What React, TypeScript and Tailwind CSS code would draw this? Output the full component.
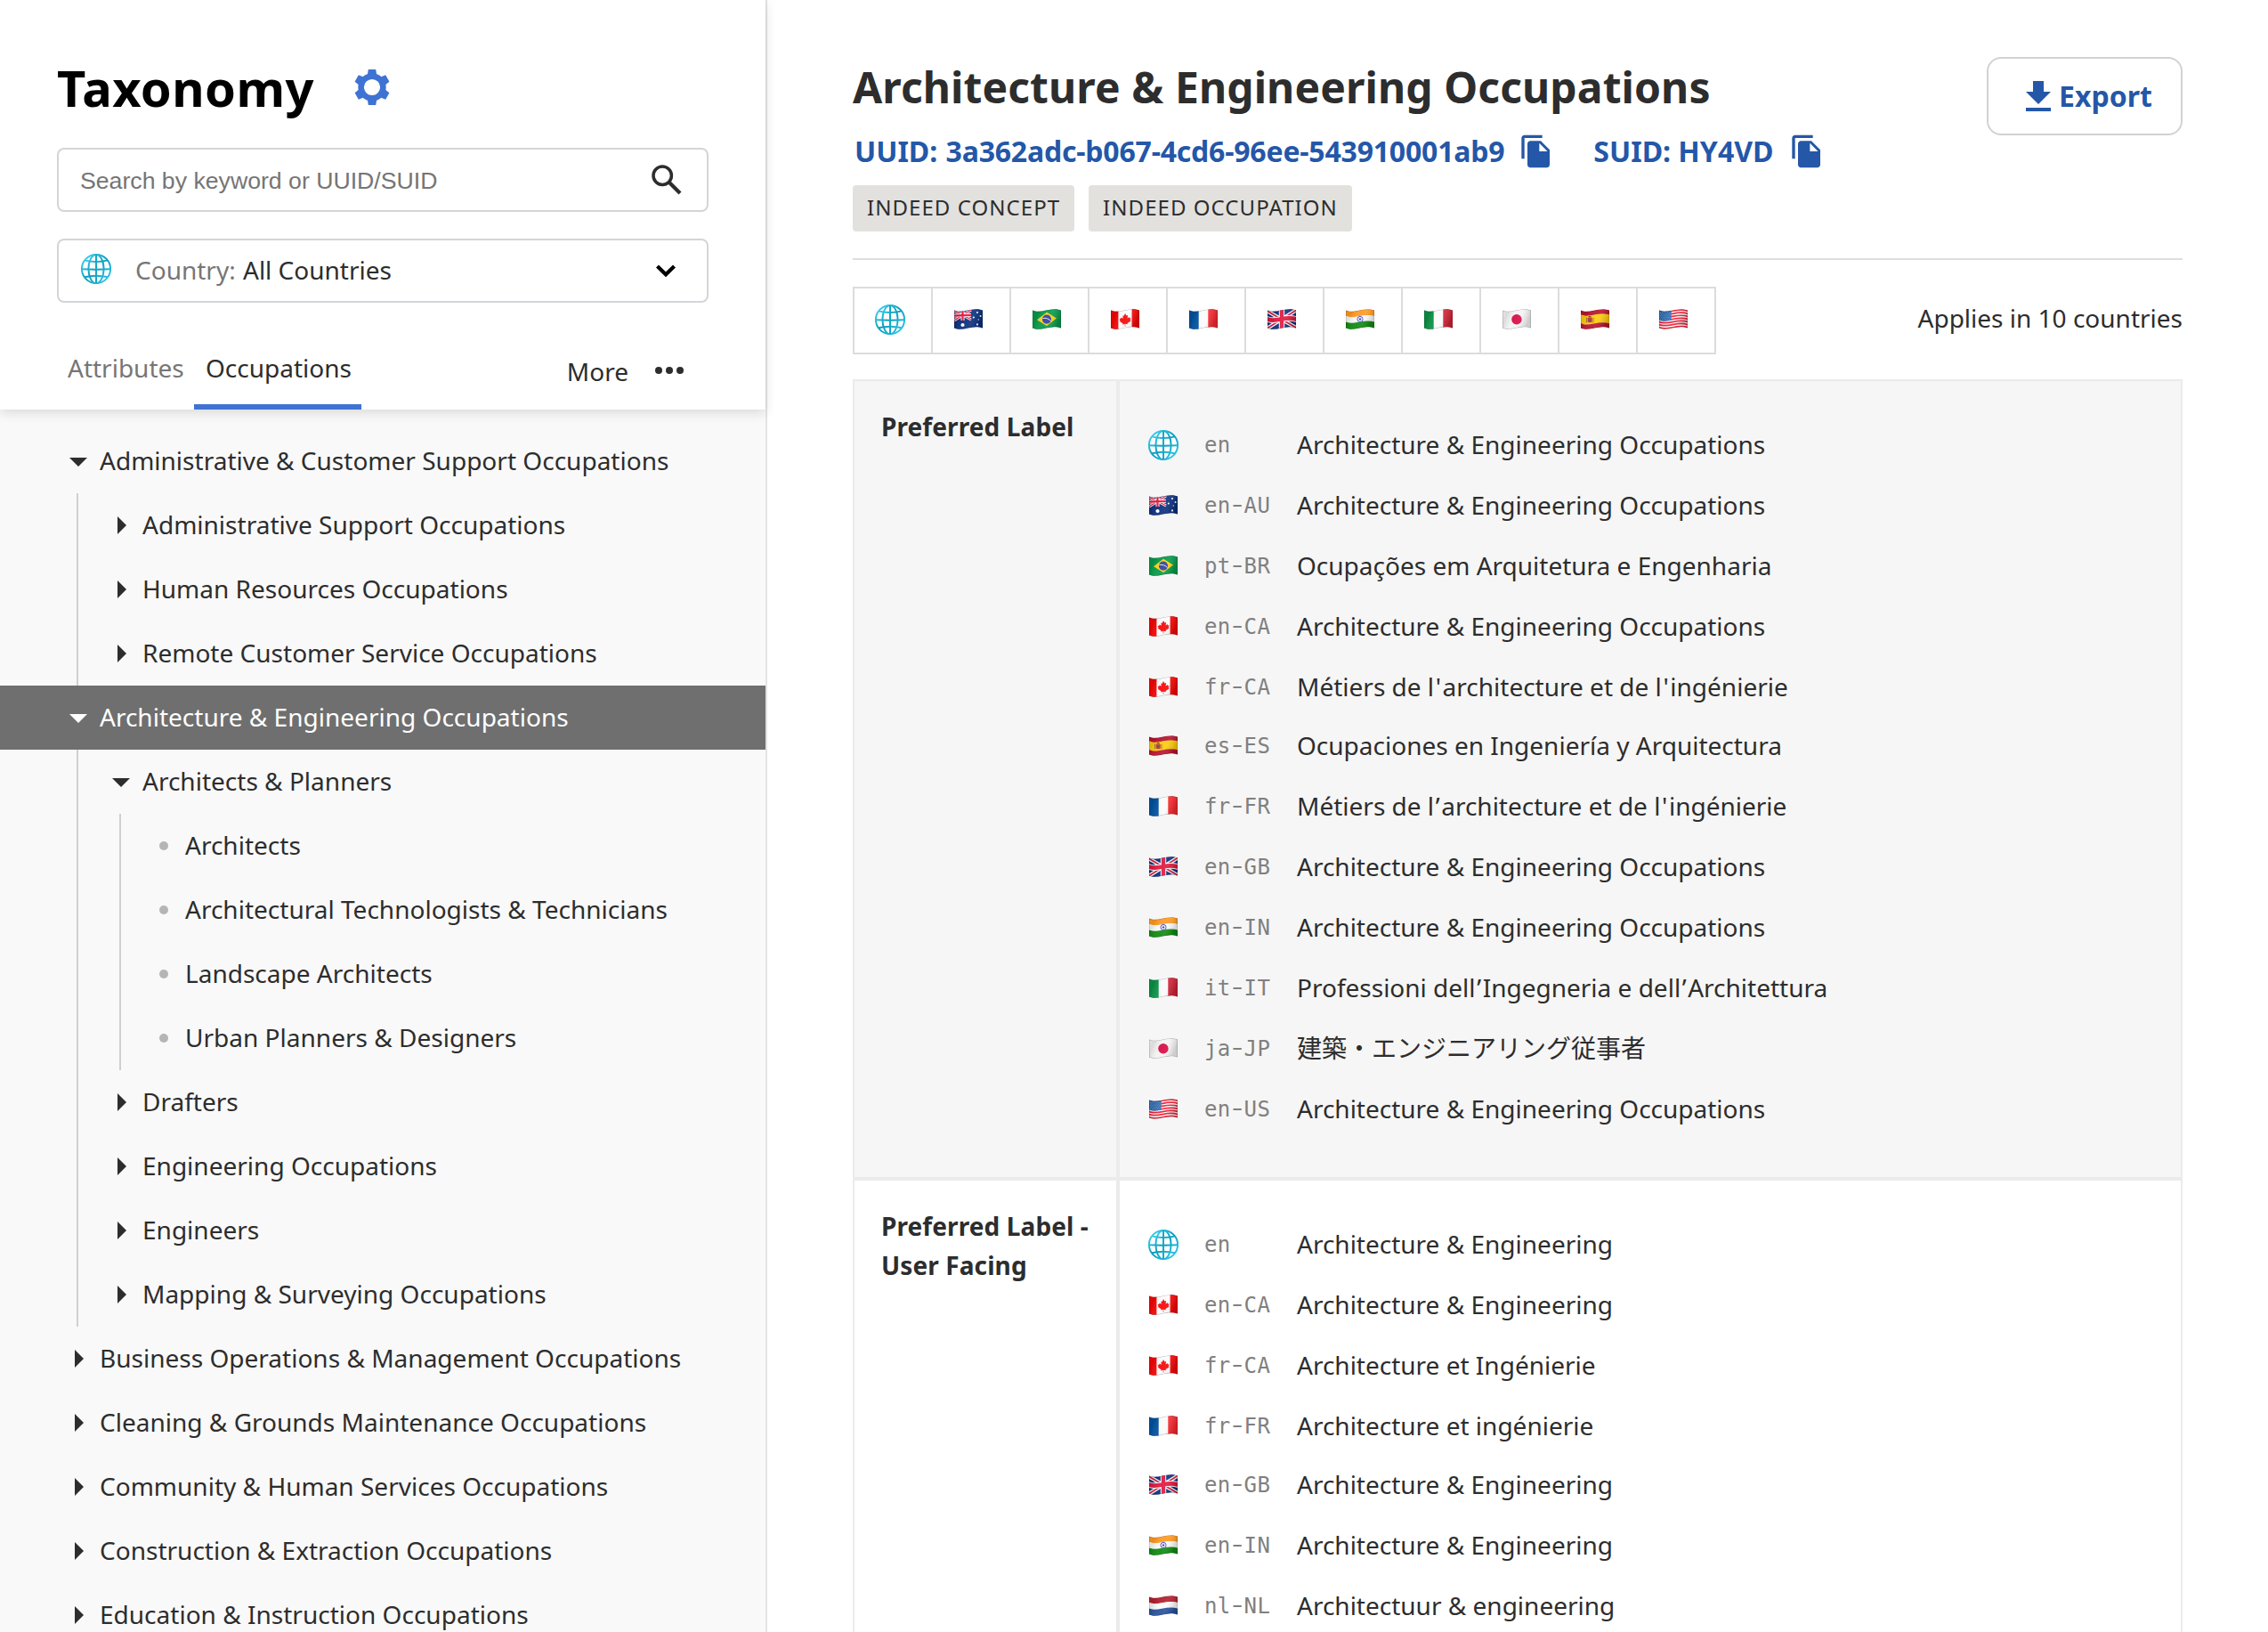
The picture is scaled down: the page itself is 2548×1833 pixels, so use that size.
import React from "react";

type FlagCode = "AU" | "BR" | "CA" | "FR" | "GB" | "IN" | "IT" | "JP" | "ES" | "US" | "NL";

/* ---------- Icons ---------- */

function Globe({ className = "" }: { className?: string }) {
  const id = React.useId();
  return (
    <svg viewBox="0 0 36 36" className={`h-9 w-9 shrink-0 ${className}`} fill="none">
      <defs>
        <linearGradient id={id} gradientUnits="userSpaceOnUse" x1="4" y1="4" x2="32" y2="32">
          <stop offset="0" stopColor="#45d3f0" />
          <stop offset="0.5" stopColor="#0a9dbd" />
          <stop offset="1" stopColor="#35cbea" />
        </linearGradient>
      </defs>
      <circle cx="18" cy="18" r="16.1" fill="#fff" stroke={`url(#${id})`} strokeWidth="2" />
      <g stroke={`url(#${id})`} strokeWidth="2">
        <ellipse cx="18" cy="18" rx="8.6" ry="16.1" />
        <path d="M5 8.4c8 1.900 18 1.900 26 0M2 18.200c10 .6 22 .6 32 0M4.600 27.200c8-1.800 19-1.800 26.800 0" />
        <path d="M17 1.800h2v32.400h-2z" fill="#12a8c8" stroke="none" />
      </g>
    </svg>
  );
}

const wave = (y: number) => `M-1 ${1.5 + y}H0c10 4.5 20 -4.500 32 0h1`;

function Band({ y, h, color }: { y: number; h: number; color: string }) {
  return <path d={wave(y + h / 2)} stroke={color} strokeWidth={h + 0.3} fill="none" />;
}

function UnionJack() {
  return (
    <>
      <rect width="32" height="24" fill="#0a2f7c" />
      <path d="M0 2.500 32 21M0 21.500 32 1.500" stroke="#fff" strokeWidth="4.200" />
      <path d="M0 2.500 32 21M0 21.500 32 1.500" stroke="#d8163c" strokeWidth="1.600" />
      <Band y={6.8} h={6.400} color="#fff" />
      <path d="M16 0v24" stroke="#fff" strokeWidth="6.400" />
      <Band y={7.800} h={4.400} color="#e0183f" />
      <path d="M16 0v24" stroke="#e0183f" strokeWidth="4.400" />
    </>
  );
}

function FlagArt({ code }: { code: FlagCode }) {
  switch (code) {
    case "AU":
      return (
        <>
          <rect width="32" height="24" fill="#0b2f7d" />
          <g>
            <path d="M0 2 19 12M0 13 19 1" stroke="#fff" strokeWidth="2.800" />
            <path d="M0 2 19 12M0 13 19 1" stroke="#e0183f" strokeWidth="1.200" />
            <path d="M0 7.600 19 6.800M9.500 1v12" stroke="#fff" strokeWidth="4" />
            <path d="M0 7.600 19 6.800M9.500 1v12" stroke="#f0123a" strokeWidth="2.200" />
          </g>
          <circle cx="9.500" cy="18" r="2.100" fill="#fff" />
          <g fill="#fff">
            <circle cx="26" cy="4" r="1.050" />
            <circle cx="21.800" cy="9.500" r="1.050" />
            <circle cx="29.600" cy="8" r="1.050" />
            <circle cx="27.300" cy="12" r="0.650" />
            <circle cx="26" cy="17.500" r="1.150" />
          </g>
        </>
      );
    case "BR":
      return (
        <>
          <rect width="32" height="24" fill="#079a49" />
          <path d="M5 12.300 16 3.800l11 6.700-11 8.600z" fill="#fcd116" />
          <circle cx="16" cy="11.600" r="5.100" fill="#32419b" />
          <path d="M11.300 10.600c3.500-1 7 .4 9.300 2.900" stroke="#dfe6f5" strokeWidth="1" fill="none" />
        </>
      );
    case "CA":
      return (
        <>
          <rect width="32" height="24" fill="#fbfbfb" />
          <path d="M0 0h8.400v24H0zM23.600 0H32v24h-8.400z" fill="#f60606" />
          <path
            d="M16 5l1.500 2.600 1.600-.6-.5 3.400 2-1.300.4 1.300 1.700-.1-1 2.300.7.800-3.800 2.700.2 1.100-2.500-.4v2.900h-.6v-2.900l-2.500.6.2-1.200-3.600-2.400.7-.8-.9-2.100 1.700-.1.400-1.200 2.100 1.100-.5-3.300 1.500.4z"
            fill="#f60606"
          />
        </>
      );
    case "FR":
      return (
        <>
          <rect width="32" height="24" fill="#fafafa" />
          <path d="M0 0h10.700v24H0z" fill="#0052a0" />
          <path d="M21.300 0H32v24H21.300z" fill="#f5282e" />
        </>
      );
    case "IT":
      return (
        <>
          <rect width="32" height="24" fill="#fafafa" />
          <path d="M0 0h10.700v24H0z" fill="#0a9246" />
          <path d="M21.300 0H32v24H21.300z" fill="#cf2336" />
        </>
      );
    case "GB":
      return <UnionJack />;
    case "IN":
      return (
        <>
          <Band y={0} h={6.700} color="#ff9a22" />
          <Band y={6.700} h={6.700} color="#fafafa" />
          <Band y={13.300} h={7} color="#0f8a10" />
          <circle cx="16" cy="11.500" r="3.100" fill="#e4e4fb" stroke="#3c3cc0" strokeWidth="0.900" />
          <circle cx="16" cy="11.500" r="1.100" fill="#2525a8" />
        </>
      );
    case "JP":
      return (
        <>
          <rect width="32" height="24" fill="#f3f3f3" />
          <circle cx="15.900" cy="11.700" r="5.700" fill="#d80a44" />
        </>
      );
    case "ES":
      return (
        <>
          <Band y={0} h={5.200} color="#b9132f" />
          <Band y={5.200} h={9.800} color="#fccb0b" />
          <Band y={15} h={5.200} color="#b9132f" />
          <path d="M7.600 10h5.200v4.200c0 1.400-5.200 1.400-5.200 0z" fill="#c0392b" />
          <path d="M6.400 9.600v6M14 9.600v6" stroke="#8a6a4a" strokeWidth="0.900" />
          <path d="M8.300 9.500c0-2.300 3.800-2.300 3.800 0z" fill="#9c3a22" />
          <circle cx="10.200" cy="12.800" r="1.100" fill="#5a4a6a" />
        </>
      );
    case "US":
      return (
        <>
          <rect width="32" height="24" fill="#fafafa" />
          {[0, 2, 4, 6, 8, 10, 12].map((i) => (
            <Band key={i} y={i * 1.54} h={1.400} color="#ea1c35" />
          ))}
          <path d="M0 0h13.600v12.600C9 13.600 4 14 0 12.400z" fill="#2866ac" />
          <g stroke="#a8c8ea" strokeWidth="0.800" strokeDasharray="0.800 1.300">
            <path d="M1 4.200h12M2 6h12M1 7.800h12M2 9.600h12M1 11.400h12" />
          </g>
        </>
      );
    case "NL":
      return (
        <>
          <Band y={0} h={6.700} color="#b3202e" />
          <Band y={6.700} h={6.700} color="#fafafa" />
          <Band y={13.300} h={7} color="#27509b" />
        </>
      );
  }
}

function Flag({ code, className = "" }: { code: FlagCode; className?: string }) {
  const id = React.useId();
  const outline = "M0 1.500c10 4.500 20 -4.500 32 0v20c-12 -4.500 -22 4.500 -32 0z";
  return (
    <svg viewBox="0 0 32 24" className={`h-6 w-8 shrink-0 ${className}`}>
      <defs>
        <clipPath id={`${id}c`}>
          <path d={outline} />
        </clipPath>
        <linearGradient id={`${id}g`} x1="0" y1="0" x2="1" y2="0.250">
          <stop offset="0" stopColor="#000" stopOpacity="0.060" />
          <stop offset="0.200" stopColor="#000" stopOpacity="0.100" />
          <stop offset="0.450" stopColor="#fff" stopOpacity="0.060" />
          <stop offset="0.700" stopColor="#fff" stopOpacity="0.100" />
          <stop offset="1" stopColor="#000" stopOpacity="0.160" />
        </linearGradient>
      </defs>
      <g clipPath={`url(#${id}c)`}>
        <FlagArt code={code} />
        <path d={outline} fill={`url(#${id}g)`} stroke="#000" strokeOpacity="0.280" strokeWidth="1" />
      </g>
    </svg>
  );
}

function Mark({ code, gap }: { code?: FlagCode; gap: string }) {
  return (
    <span className={`flex w-9 shrink-0 items-center justify-center pt-0.5 ${gap}`}>
      {code ? <Flag code={code} /> : <Globe />}
    </span>
  );
}

function GearIcon() {
  const tooth = "M-4.200-20h8.400l1.300 8h-11z";
  return (
    <svg viewBox="-20 -20 40 40" className="h-10 w-10 text-[#3f73d3]">
      <circle r="12.400" fill="none" stroke="currentColor" strokeWidth="6.600" />
      {[0, 60, 120, 180, 240, 300].map((a) => (
        <path key={a} d={tooth} transform={`rotate(${a})`} fill="currentColor" />
      ))}
    </svg>
  );
}

function SearchIcon() {
  return (
    <svg viewBox="0 0 34 34" className="h-[34px] w-[34px]" fill="none" stroke="#2d2d2d">
      <circle cx="12.200" cy="12.200" r="10.200" strokeWidth="3.500" />
      <path d="M19.500 19.500 32 32" strokeWidth="4.300" />
    </svg>
  );
}

function CopyIcon() {
  return (
    <svg viewBox="0 0 24 24" className="h-10 w-10 shrink-0" fill="currentColor">
      <path d="M16 1H4c-1.100 0-2 .9-2 2v14h2V3h12V1zm-1 4 6 6v10c0 1.100-.9 2-2 2H7.990C6.890 23 6 22.100 6 21l.01-14c0-1.100.89-2 1.990-2h7zm-1 7h5.500L14 6.500V12z" />
    </svg>
  );
}

function DownloadIcon() {
  return (
    <svg viewBox="5 3 14 17" className="h-[34px] w-7" fill="currentColor">
      <path d="M19 9h-4V3H9v6H5l7 7 7-7zM5 18v2h14v-2H5z" />
    </svg>
  );
}

/* ---------- Sidebar tree ---------- */

type TreeNode = { label: string; open?: boolean; selected?: boolean; leaf?: boolean; children?: TreeNode[] };

const tree: TreeNode[] = [
  {
    label: "Administrative & Customer Support Occupations",
    open: true,
    children: [
      { label: "Administrative Support Occupations" },
      { label: "Human Resources Occupations" },
      { label: "Remote Customer Service Occupations" },
    ],
  },
  {
    label: "Architecture & Engineering Occupations",
    open: true,
    selected: true,
    children: [
      {
        label: "Architects & Planners",
        open: true,
        children: [
          { label: "Architects", leaf: true },
          { label: "Architectural Technologists & Technicians", leaf: true },
          { label: "Landscape Architects", leaf: true },
          { label: "Urban Planners & Designers", leaf: true },
        ],
      },
      { label: "Drafters" },
      { label: "Engineering Occupations" },
      { label: "Engineers" },
      { label: "Mapping & Surveying Occupations" },
    ],
  },
  { label: "Business Operations & Management Occupations" },
  { label: "Cleaning & Grounds Maintenance Occupations" },
  { label: "Community & Human Services Occupations" },
  { label: "Construction & Extraction Occupations" },
  { label: "Education & Instruction Occupations" },
];

function Toggle({ node }: { node: TreeNode }) {
  if (node.leaf) return <span className="h-2.5 w-2.5 rounded-full bg-[#b5b5b5]" />;
  return node.open ? (
    <svg viewBox="0 0 20 10" className="mt-0.5 h-2.5 w-5" fill="currentColor">
      <path d="M0 0h20L10 10z" />
    </svg>
  ) : (
    <svg viewBox="0 0 10 20" className="ml-0.5 h-5 w-2.5" fill="currentColor">
      <path d="M0 0v20l10-10z" />
    </svg>
  );
}

function Tree({ nodes, depth = 0 }: { nodes: TreeNode[]; depth?: number }) {
  return (
    <ul>
      {nodes.map((n) => (
        <li key={n.label}>
          <div
            className={`flex h-[72px] items-center gap-3.5 whitespace-nowrap leading-[38px] ${
              depth === 0 ? "pl-[78px]" : "pl-[38px]"
            } ${n.selected ? "bg-[#6f6f6f] text-white" : "text-[#2d2d2d]"}`}
          >
            <span className="flex w-5 justify-center">
              <Toggle node={n} />
            </span>
            <span className="pb-0.5 tracking-[0.010px]">{n.label}</span>
          </div>
          {n.children && (
            <div className={`border-l-2 border-[#d0d0d0] ${depth === 0 ? "ml-[86px]" : "ml-[46px]"}`}>
              <Tree nodes={n.children} depth={depth + 1} />
            </div>
          )}
        </li>
      ))}
    </ul>
  );
}

function Sidebar() {
  return (
    <aside className="flex h-full w-[862px] shrink-0 flex-col border-r-2 border-[#e4e4e4] bg-[#f9f9f9]">
      <header className="z-10 h-[460px] shrink-0 bg-white px-16 pt-[60px] shadow-[0_4px_12px_rgba(0,0,0,0.12)]">
        <div className="flex h-[76px] items-center gap-[45px]">
          <h1 className="text-[56px] font-bold leading-[76px] tracking-[0.400px] text-black">Taxonomy</h1>
          <GearIcon />
        </div>
        <div className="mt-[30px] flex h-[72px] items-center justify-between rounded-lg border-2 border-[#d3d5d9] pl-6 pr-7">
          <span className="pt-px font-['Liberation_Sans',sans-serif] text-[26.67px] text-[#757575]">
            Search by keyword or UUID/SUID
          </span>
          <SearchIcon />
        </div>
        <div className="mt-[30px] flex h-[72px] items-center rounded-lg border-2 border-[#d3d5d9] pl-6 pr-[34px]">
          <Globe className="-mt-1" />
          <span className="-mt-0.5 ml-[26px] text-[#767676]">
            Country: <span className="ml-px text-[#2d2d2d]">All Countries</span>
          </span>
          <svg viewBox="0 0 24 16" className="ml-auto h-4 w-6" fill="none" stroke="#000" strokeWidth="4.200">
            <path d="M2.500 3 12 12.300 21.500 3" />
          </svg>
        </div>
        <div className="flex h-[120px] items-end">
          <div className="h-[66px] w-[154px] px-3 leading-[38px] text-[#767676]">Attributes</div>
          <div className="h-[66px] w-[188px] border-b-[6px] border-[#3f73d3] pl-[13px] leading-[38px] text-[#2d2d2d]">
            Occupations
          </div>
          <div className="ml-auto flex h-[62px] pr-[26px] leading-[38px] text-[#2d2d2d]">
            More
            <svg viewBox="0 0 34 8" className="ml-[30px] mt-3.5 h-2 w-[34px]" fill="#2d2d2d">
              <circle cx="4" cy="4" r="4" />
              <circle cx="16" cy="4" r="4" />
              <circle cx="28" cy="4" r="4" />
            </svg>
          </div>
        </div>
      </header>
      <nav className="mt-[22px]">
        <Tree nodes={tree} />
      </nav>
    </aside>
  );
}

/* ---------- Detail panel ---------- */

type Entry = [string, FlagCode | undefined, string];

const AEO = "Architecture & Engineering Occupations";
const AE = "Architecture & Engineering";

const preferred: Entry[] = [
  ["en", undefined, AEO],
  ["en-AU", "AU", AEO],
  ["pt-BR", "BR", "Ocupações em Arquitetura e Engenharia"],
  ["en-CA", "CA", AEO],
  ["fr-CA", "CA", "Métiers de l'architecture et de l'ingénierie"],
  ["es-ES", "ES", "Ocupaciones en Ingeniería y Arquitectura"],
  ["fr-FR", "FR", "Métiers de l’architecture et de l'ingénierie"],
  ["en-GB", "GB", AEO],
  ["en-IN", "IN", AEO],
  ["it-IT", "IT", "Professioni dell’Ingegneria e dell’Architettura"],
  ["ja-JP", "JP", "建築・エンジニアリング従事者"],
  ["en-US", "US", AEO],
];

const userFacing: Entry[] = [
  ["en", undefined, AE],
  ["en-CA", "CA", AE],
  ["fr-CA", "CA", "Architecture et Ingénierie"],
  ["fr-FR", "FR", "Architecture et ingénierie"],
  ["en-GB", "GB", AE],
  ["en-IN", "IN", AE],
  ["nl-NL", "NL", "Architectuur & engineering"],
];

const countries: (FlagCode | undefined)[] = [undefined, "AU", "BR", "CA", "FR", "GB", "IN", "IT", "JP", "ES", "US"];

/* Gives apostrophes a little air, since the font kerns them tightly. */
function Label({ text }: { text: string }) {
  return (
    <span>
      {text.split(/(['’])/).map((part, i) =>
        i % 2 ? (
          <span key={i} className="mx-[1.600px]">
            {part}
          </span>
        ) : (
          part
        ),
      )}
    </span>
  );
}

/* Locale code with a slightly wide dash between language and region. */
function Locale({ code }: { code: string }) {
  const [lang, region] = code.split("-");
  return (
    <span className="w-[104px] pt-0.5 font-['DejaVu_Sans_Mono',monospace] text-[24px] tracking-[0.400px] text-[#808080]">
      {lang}
      {region && (
        <>
          <span className="inline-block origin-center -translate-y-px scale-x-[1.500]">-</span>
          {region}
        </>
      )}
    </span>
  );
}

function Section({
  label,
  entries,
  shortRow,
  className,
}: {
  label: string;
  entries: Entry[];
  shortRow: number;
  className: string;
}) {
  return (
    <div className={`flex shrink-0 ${className}`}>
      <div className="w-[298px] shrink-0 border-r-4 border-[#ebebeb] pl-[30px] pr-4 pt-[29px] font-bold leading-[44px] tracking-[0.100px]">
        {label}
      </div>
      <div className="flex-1 pl-[31px] pt-[37px]">
        {entries.map(([locale, flag, text], i) => (
          <div
            key={locale}
            className={`flex items-center whitespace-nowrap leading-[38px] ${i === shortRow ? "h-[66px] pb-0.5 [&>*]:translate-y-0.5" : "h-[68px]"}`}
          >
            <Mark code={flag} gap="mr-7" />
            <Locale code={locale} />
            <Label text={text} />
          </div>
        ))}
      </div>
    </div>
  );
}

function Tag({ children }: { children: React.ReactNode }) {
  return (
    <span className="flex h-[52px] items-center rounded bg-[#e2e1de] px-4 pb-0.5 text-2xl tracking-[1.050px]">
      {children}
    </span>
  );
}

function Detail() {
  return (
    <main className="flex h-full flex-1 flex-col px-24 text-[#2d2d2d]">
      <div className="flex items-start justify-between border-b-2 border-[#dedede] pb-[30px] pt-16">
        <div className="pt-0.5">
          <h2 className="whitespace-nowrap text-5xl font-bold leading-[64px] tracking-[0.100px]">{AEO}</h2>
          <div className="mt-[18px] flex h-11 items-center pl-0.5 text-[32px] font-bold leading-[44px] text-[#2457a8]">
            <span>
              UUID: <span className="ml-px tracking-[-0.200px]">3a362adc-b067-4cd6-96ee-543910001ab9</span>
            </span>
            <span className="ml-4 flex">
              <CopyIcon />
            </span>
            <span className="ml-11">SUID: HY4VD</span>
            <span className="ml-[18px] flex">
              <CopyIcon />
            </span>
          </div>
          <div className="mt-4 flex gap-4">
            <Tag>INDEED CONCEPT</Tag>
            <Tag>INDEED OCCUPATION</Tag>
          </div>
        </div>
        <button className="flex h-[88px] w-[220px] items-center rounded-2xl border-2 border-[#d4d2d0] pl-[42px] text-[32px] font-bold text-[#2457a8]">
          <DownloadIcon />
          <span className="ml-[9px]">Export</span>
        </button>
      </div>
      <div className="mt-[30px] flex items-center justify-between">
        <div className="flex h-[76px] border-2 border-r-0 border-[#dcdcdc]">
          {countries.map((c, i) => (
            <div key={i} className="flex w-[88px] items-center justify-center border-r-2 border-[#dcdcdc] pb-[5px] pr-1.5">
              <Mark code={c} gap="" />
            </div>
          ))}
        </div>
        <span className="pb-1.5 leading-[38px]">Applies in 10 countries</span>
      </div>
      <div className="mt-7 border-2 border-[#ebebeb]">
        <Section
          label="Preferred Label"
          entries={preferred}
          shortRow={4}
          className="h-[898px] border-b-4 border-[#ebebeb] bg-[#f6f6f6]"
        />
        <Section
          label="Preferred Label - User Facing"
          entries={userFacing}
          shortRow={3}
          className="h-[800px] bg-white"
        />
      </div>
    </main>
  );
}

export default function App() {
  return (
    <div className="flex h-[1833px] w-[2548px] overflow-hidden bg-white font-['Noto_Sans','Noto_Sans_CJK_JP',sans-serif] text-[28px]">
      <Sidebar />
      <Detail />
    </div>
  );
}
